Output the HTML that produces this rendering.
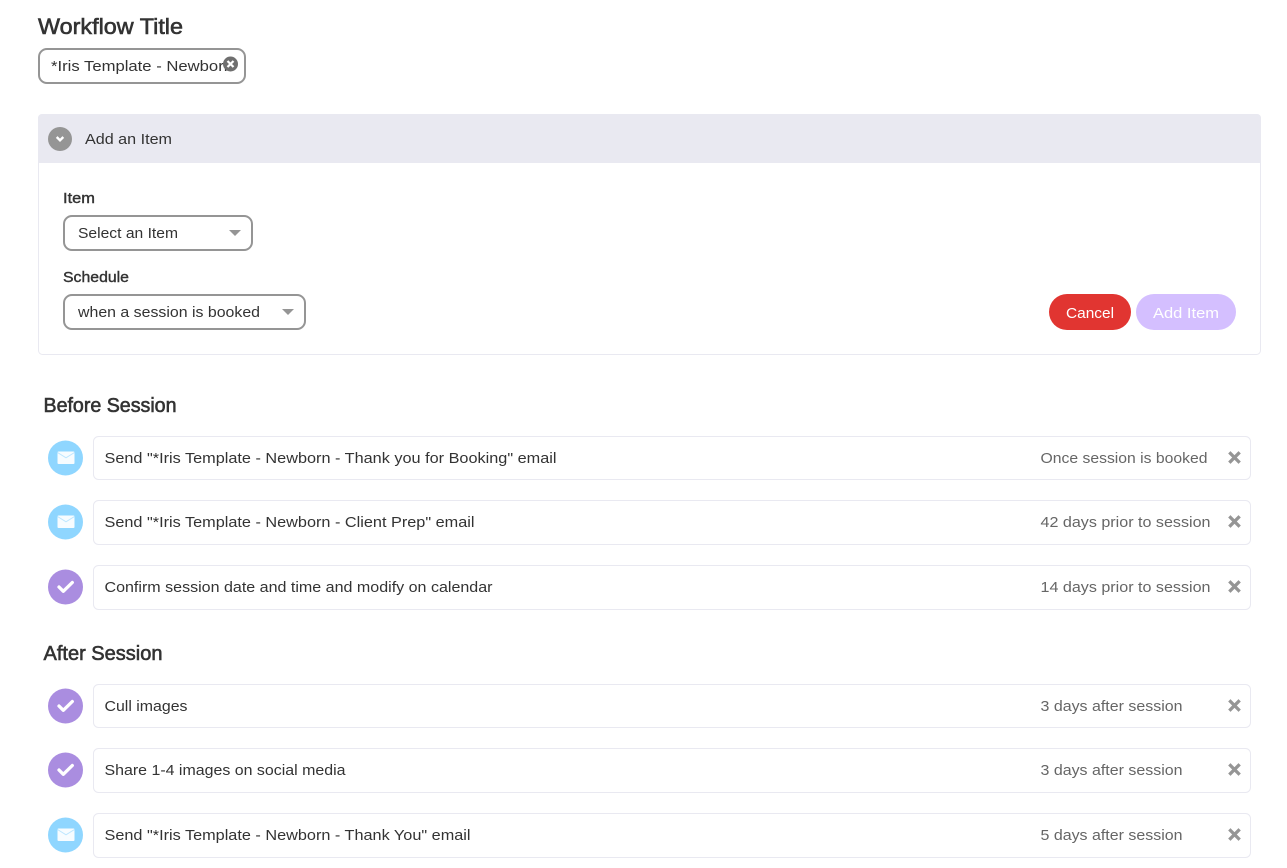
<!DOCTYPE html>
<html lang="en">
<head>
<meta charset="utf-8">
<title>Workflow</title>
<style>
html,body{margin:0;padding:0;background:#fff;width:1287px;height:868px;overflow:hidden}
svg{display:block}
text{font-family:"Liberation Sans",sans-serif;font-size:15px;fill:#333;white-space:pre}
.h{font-size:20px;stroke:#333;stroke-width:.6px}
.l{font-size:15px;stroke:#333;stroke-width:.4px}
.r{fill:#666}
.row{fill:#fff;stroke:#e9e9f1;stroke-width:1}
.sel{fill:#fff;stroke:#959595;stroke-width:2}
</style>
</head>
<body>
<svg width="1287" height="868" viewBox="0 0 1287 868" xmlns="http://www.w3.org/2000/svg">
<defs>
<g id="mail"><circle cx="65.5" cy="0" r="17.5" fill="#8fd6ff"/><rect x="57.5" y="-6.5" width="17" height="12.500" rx="1" fill="#fff" fill-opacity=".93"/><path d="M57.500-5.500 66-.2 74.500-5.500" fill="none" stroke="#bce6ff" stroke-width="1"/></g>
<g id="chk"><circle cx="65.500" cy="0" r="17.500" fill="#aa8de0"/><path d="M59 0 63.300 4.300 72.300-4.500" fill="none" stroke="#fff" stroke-width="3.300" stroke-linejoin="round" stroke-linecap="round"/></g>
<path id="x" d="M1230.500-3.500 1238.500 4.500M1238.500-3.500 1230.500 4.500" stroke="#959595" stroke-width="3.300" fill="none" stroke-linecap="square"/>
</defs>

<text class="h" x="38" y="34" style="font-size:22px" textLength="145" lengthAdjust="spacingAndGlyphs">Workflow Title</text>
<rect class="sel" x="39" y="49" width="206" height="34" rx="8"/>
<text x="51" y="71" textLength="182" lengthAdjust="spacingAndGlyphs">*Iris Template - Newborn</text>
<circle cx="230.500" cy="64" r="7.500" fill="#6f6f6f"/>
<path d="M227.500 61 233.500 67M233.500 61 227.500 67" stroke="#fff" stroke-width="2.200"/>

<rect x="38.500" y="114.500" width="1222" height="240" rx="4" fill="#fff" stroke="#e9e9f1"/>
<path d="M38 163V118a4 4 0 0 1 4-4H1257a4 4 0 0 1 4 4V163Z" fill="#e9e9f1"/>
<circle cx="60" cy="139" r="12" fill="#959595"/>
<path d="M56.700 137 60 140.300 63.300 137" fill="none" stroke="#fff" stroke-width="2.400"/>
<text x="85" y="144" textLength="87" lengthAdjust="spacingAndGlyphs">Add an Item</text>

<text class="l" x="63" y="203" textLength="32" lengthAdjust="spacingAndGlyphs">Item</text>
<rect class="sel" x="64" y="216" width="188" height="34" rx="8"/>
<text x="78" y="238" textLength="100" lengthAdjust="spacingAndGlyphs">Select an Item</text>
<path d="M229 230H241L235 236Z" fill="#959595"/>

<text class="l" x="63" y="282" textLength="66" lengthAdjust="spacingAndGlyphs">Schedule</text>
<rect class="sel" x="64" y="295" width="241" height="34" rx="8"/>
<text x="78" y="317" textLength="182" lengthAdjust="spacingAndGlyphs">when a session is booked</text>
<path d="M282 309H294L288 315Z" fill="#959595"/>

<rect x="1049" y="294" width="82" height="36" rx="18" fill="#e13531"/>
<text x="1066" y="318" style="fill:#fff" textLength="48" lengthAdjust="spacingAndGlyphs">Cancel</text>
<rect x="1136" y="294" width="100" height="36" rx="18" fill="#d4bfff"/>
<text x="1153" y="318" style="fill:#fff" textLength="66" lengthAdjust="spacingAndGlyphs">Add Item</text>

<text class="h" x="43.500" y="412" textLength="133" lengthAdjust="spacingAndGlyphs">Before Session</text>

<rect class="row" x="93.500" y="436.500" width="1157" height="43" rx="5"/>
<use href="#mail" transform="translate(0 458)"/>
<text x="104.500" y="463" textLength="452" lengthAdjust="spacingAndGlyphs">Send "*Iris Template - Newborn - Thank you for Booking" email</text>
<text class="r" x="1040.500" y="463" textLength="167" lengthAdjust="spacingAndGlyphs">Once session is booked</text>
<use href="#x" transform="translate(0 457)"/>

<rect class="row" x="93.500" y="500.500" width="1157" height="44" rx="5"/>
<use href="#mail" transform="translate(0 522)"/>
<text x="104.500" y="527" textLength="370" lengthAdjust="spacingAndGlyphs">Send "*Iris Template - Newborn - Client Prep" email</text>
<text class="r" x="1040.500" y="527" textLength="170" lengthAdjust="spacingAndGlyphs">42 days prior to session</text>
<use href="#x" transform="translate(0 521)"/>

<rect class="row" x="93.500" y="565.500" width="1157" height="44" rx="5"/>
<use href="#chk" transform="translate(0 587)"/>
<text x="104.500" y="592" textLength="388" lengthAdjust="spacingAndGlyphs">Confirm session date and time and modify on calendar</text>
<text class="r" x="1040.500" y="592" textLength="170" lengthAdjust="spacingAndGlyphs">14 days prior to session</text>
<use href="#x" transform="translate(0 586)"/>

<text class="h" x="43.500" y="660" textLength="119" lengthAdjust="spacingAndGlyphs">After Session</text>

<rect class="row" x="93.500" y="684.500" width="1157" height="43" rx="5"/>
<use href="#chk" transform="translate(0 706)"/>
<text x="104.500" y="711" textLength="83" lengthAdjust="spacingAndGlyphs">Cull images</text>
<text class="r" x="1040.500" y="711" textLength="142" lengthAdjust="spacingAndGlyphs">3 days after session</text>
<use href="#x" transform="translate(0 705)"/>

<rect class="row" x="93.500" y="748.500" width="1157" height="44" rx="5"/>
<use href="#chk" transform="translate(0 770)"/>
<text x="104.500" y="775" textLength="241" lengthAdjust="spacingAndGlyphs">Share 1-4 images on social media</text>
<text class="r" x="1040.500" y="775" textLength="142" lengthAdjust="spacingAndGlyphs">3 days after session</text>
<use href="#x" transform="translate(0 769)"/>

<rect class="row" x="93.500" y="813.500" width="1157" height="44" rx="5"/>
<use href="#mail" transform="translate(0 835)"/>
<text x="104.500" y="840" textLength="366" lengthAdjust="spacingAndGlyphs">Send "*Iris Template - Newborn - Thank You" email</text>
<text class="r" x="1040.500" y="840" textLength="142" lengthAdjust="spacingAndGlyphs">5 days after session</text>
<use href="#x" transform="translate(0 834)"/>
</svg>
</body>
</html>
